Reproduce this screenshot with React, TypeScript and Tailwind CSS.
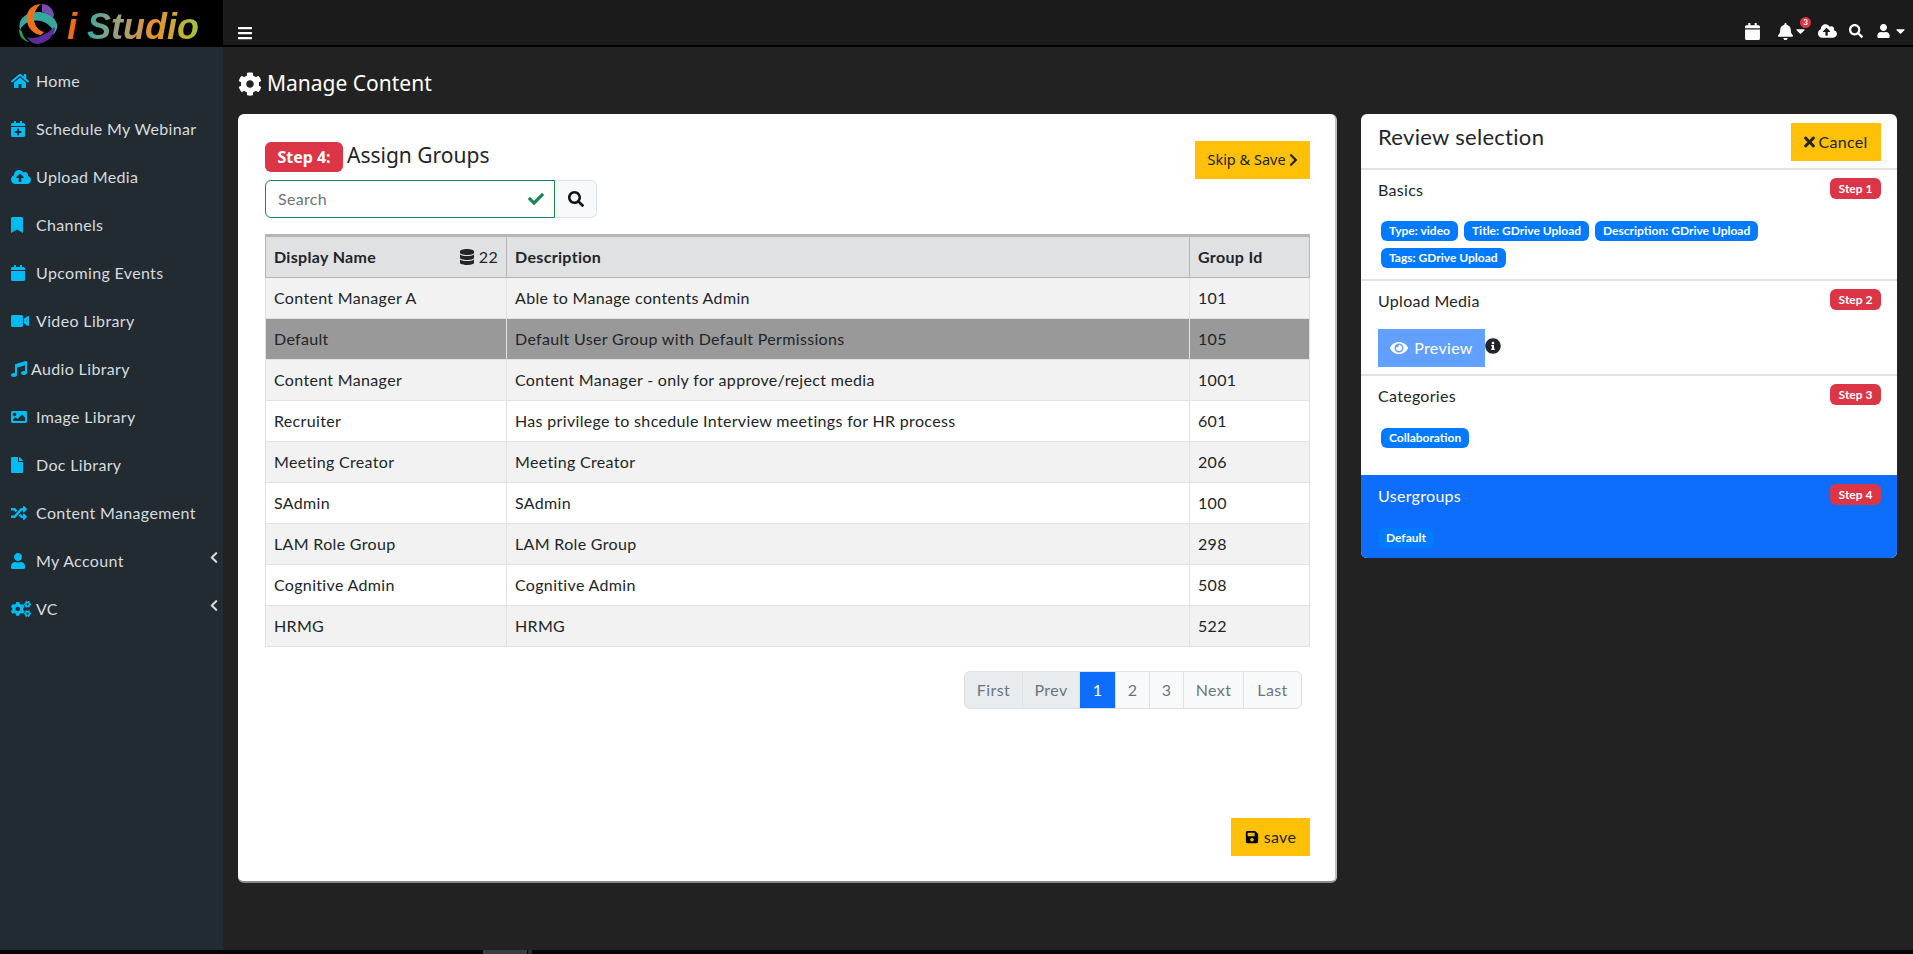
import React from 'react';
import {
  FaHome, FaCalendarPlus, FaCloudUploadAlt, FaBookmark, FaCalendar, FaVideo, FaMusic, FaImage, FaFile,
  FaRandom, FaUser, FaCogs, FaChevronLeft, FaChevronRight, FaCog, FaCheck, FaSearch, FaDatabase,
  FaTimes, FaEye, FaInfoCircle, FaSave, FaBell, FaBars, FaCaretDown,
} from 'react-icons/fa';

const body = '[font-family:Lato,sans-serif]';

const navItems = [
  { label: 'Home', icon: FaHome, size: 'w-[18px] h-[16px]' },
  { label: 'Schedule My Webinar', icon: FaCalendarPlus, size: 'w-[14px] h-[16px]' },
  { label: 'Upload Media', icon: FaCloudUploadAlt, size: 'w-[20px] h-[16px]' },
  { label: 'Channels', icon: FaBookmark, size: 'w-[12px] h-[16px]' },
  { label: 'Upcoming Events', icon: FaCalendar, size: 'w-[14px] h-[16px]' },
  { label: 'Video Library', icon: FaVideo, size: 'w-[18px] h-[16px]' },
  { label: 'Audio Library', icon: FaMusic, size: 'w-[16px] h-[16px]', narrow: true },
  { label: 'Image Library', icon: FaImage, size: 'w-[16px] h-[16px]' },
  { label: 'Doc Library', icon: FaFile, size: 'w-[12px] h-[16px]' },
  { label: 'Content Management', icon: FaRandom, size: 'w-[16px] h-[16px]' },
  { label: 'My Account', icon: FaUser, size: 'w-[14px] h-[16px]', chevron: true },
  { label: 'VC', icon: FaCogs, size: 'w-[20px] h-[16px]', chevron: true },
];

const groups = [
  ['Content Manager A', 'Able to Manage contents Admin', '101'],
  ['Default', 'Default User Group with Default Permissions', '105'],
  ['Content Manager', 'Content Manager - only for approve/reject media', '1001'],
  ['Recruiter', 'Has privilege to shcedule Interview meetings for HR process', '601'],
  ['Meeting Creator', 'Meeting Creator', '206'],
  ['SAdmin', 'SAdmin', '100'],
  ['LAM Role Group', 'LAM Role Group', '298'],
  ['Cognitive Admin', 'Cognitive Admin', '508'],
  ['HRMG', 'HRMG', '522'],
];

const pages = [
  { label: 'First', cls: 'w-[59px] bg-[#e9ecef] rounded-l-md text-[#6c757d]' },
  { label: 'Prev', cls: 'w-[58px] bg-[#e9ecef] text-[#6c757d]' },
  { label: '1', cls: 'w-[37px] bg-[#0d6efd] text-white border-[#0d6efd]' },
  { label: '2', cls: 'w-[35px] bg-[#f8f9fa] text-[#6c757d]' },
  { label: '3', cls: 'w-[35px] bg-[#f8f9fa] text-[#6c757d]' },
  { label: 'Next', cls: 'w-[61px] bg-[#f8f9fa] text-[#6c757d]' },
  { label: 'Last', cls: 'w-[59px] bg-[#f8f9fa] rounded-r-md text-[#6c757d]' },
];

const Chip: React.FC<{ children: React.ReactNode }> = ({ children }) => (
  <span className="h-5 px-2 rounded-md bg-[#007bff] text-white text-xs font-bold leading-5 whitespace-nowrap">{children}</span>
);

const Step: React.FC<{ n: number }> = ({ n }) => (
  <span className="w-[51px] h-[21px] rounded-md bg-[#dc3545] text-white text-xs font-bold leading-[21px] text-center">Step {n}</span>
);

const Logo = () => (
  <svg width="40" height="40" viewBox="0 0 40 40" className="shrink-0">
    <path d="M24 0c6 0 11 4 12 11l-1 3c-3-3-7-5-11-6z" fill="#7a4bb0" />
    <path d="M2 26C-1 15 8 7 22 8c8 1 15 5 17 12 1 4-1 8-4 11 1-6-3-11-12-14C14 15 6 18 2 26z" fill="#35a79c" />
    <path d="M23 0C13 0 7 9 9 17c1 7 6 13 14 14l3-3c-6-2-9-6-10-12-1-6 2-12 7-16z" fill="#f0701a" />
    <path d="M9 33c5 2 11 1 16-2 4-2 7-4 10-7 1-1 2-1 2 0-1 8-8 15-17 16-5 0-9-3-11-7z" fill="#5b2d9c" />
    <path d="M1 26c0 6 4 11 10 12-3-2-6-5-7-10-1-2-3-3-3-2z" fill="#2f9e44" />
  </svg>
);

export default function App() {
  return (
    <div className={`h-[954px] w-full overflow-hidden bg-black flex flex-col ${body}`}>
      <header className="h-[47px] flex shrink-0">
        <div className="w-[223px] h-[47px] bg-black flex items-center pl-[18px] gap-[9px]">
          <Logo />
          <span className="text-[36px] leading-none font-bold italic whitespace-nowrap [font-family:'Liberation_Sans',sans-serif] mt-[6px]">
            <span className="text-[#f26a1b]">i </span>
            <span className="bg-gradient-to-r from-[#2aa6a0] via-[#e8902a] via-60% to-[#9ac43c] bg-clip-text text-transparent">Studio</span>
          </span>
        </div>
        <div className="flex-1 h-[47px] bg-[#1b1b1b] border-b-2 border-black flex items-center justify-between pt-[17px] pl-[15px] pr-[8px] text-white">
          <FaBars className="w-[14px] h-[16px] mt-[3px]" />
          <div className="flex items-center">
            <FaCalendar className="w-[15px] h-[17px] mr-[18px]" />
            <div className="relative flex items-center mr-[13px]">
              <FaBell className="w-[15px] h-[17px]" />
              <FaCaretDown className="w-[9px] h-[14px] ml-[3px]" />
              <span className="absolute -top-[6px] left-[22px] w-[11px] h-[11px] rounded-full bg-[#dc3545] text-[8px] leading-[11px] font-bold text-center">3</span>
            </div>
            <FaCloudUploadAlt className="w-[19px] h-[16px] mr-[12px]" />
            <FaSearch className="w-[14px] h-[14px] mr-[14px]" />
            <FaUser className="w-[13px] h-[14px]" />
            <FaCaretDown className="w-[9px] h-[14px] ml-[6px]" />
          </div>
        </div>
      </header>

      <div className="flex-1 flex min-h-0">
        <aside className="w-[223px] bg-[#212b31] pt-[10px] shrink-0">
          {navItems.map((item) => (
            <div key={item.label} className="h-12 flex items-center pl-[11px] pr-[4px] relative text-[#d8dcdf] text-base tracking-[0.35px]">
              <span className={`flex shrink-0 ${item.narrow ? 'w-[20px]' : 'w-[25px]'}`}>
                <item.icon className={`text-[#00bcf2] ${item.size}`} />
              </span>
              <span className="whitespace-nowrap">{item.label}</span>
              {item.chevron && <FaChevronLeft className="absolute right-[5px] top-[14px] w-[8px] h-[13px] text-[#d8dcdf]" />}
            </div>
          ))}
        </aside>

        <main className="flex-1 bg-[#222222] pl-[15px] pr-[16px] min-w-0">
          <h1 className="h-[67px] pt-[6px] flex items-center gap-[5px] text-white text-[21px] [font-family:'Noto_Sans',sans-serif] font-normal">
            <FaCog className="w-6 h-6" /> Manage Content
          </h1>
          <div className="flex items-start gap-6">
            <section className="w-[1099px] h-[769px] bg-white rounded-md border-b-2 border-r-2 border-r-[#c0c0c0] border-b-[#8a8a8a] pl-[27px] pr-[25px] pt-[27px] text-[#212529] flex flex-col">
              <div className="flex items-start justify-between h-[39px]">
                <div className="flex items-start gap-[4px] mt-[1px]">
                  <span className="w-[78px] h-[30px] rounded-md bg-[#dc3545] text-white text-[16px] font-bold leading-[30px] text-center [font-family:'Noto_Sans',sans-serif]">Step 4:</span>
                  <span className="text-[21px] leading-[26px] [font-family:'Noto_Sans',sans-serif]">Assign Groups</span>
                </div>
                <button className="w-[115px] h-[38px] bg-[#ffc107] flex items-center justify-center gap-[3px] text-[14.5px] [font-family:'Noto_Sans',sans-serif]">
                  Skip &amp; Save <FaChevronRight className="w-[9px] h-[14px]" />
                </button>
              </div>
              <div className="flex h-[38px]">
                <div className="w-[290px] border border-[#198754] rounded-l-md flex items-center justify-between pl-[12px] pr-[10px]">
                  <span className="text-[#6c757d] tracking-[0.3px]">Search</span>
                  <FaCheck className="w-[16px] h-[16px] text-[#198754]" />
                </div>
                <div className="w-[42px] bg-[#f8f9fa] border border-l-0 border-[#dee2e6] rounded-r-md flex items-center justify-center">
                  <FaSearch className="w-[16px] h-[16px] text-[#111]" />
                </div>
              </div>

              <table className="mt-4 w-[1045px] table-fixed border-collapse text-base tracking-[0.33px]">
                <thead>
                  <tr className="h-[42px] bg-[#e0e1e3] border-t-[3px] border-[#b5b6b8] text-left">
                    <th className="w-[241px] px-2 font-bold border border-t-[3px] border-[#b5b6b8]">
                      <div className="flex justify-between items-center">
                        <span>Display Name</span>
                        <span className="flex items-center gap-[5px] font-normal"><FaDatabase className="w-[14px] h-[16px]" />22</span>
                      </div>
                    </th>
                    <th className="w-[683px] px-2 font-bold border border-t-[3px] border-[#b5b6b8]">Description</th>
                    <th className="px-2 font-bold border border-t-[3px] border-[#b5b6b8]">Group Id</th>
                  </tr>
                </thead>
                <tbody>
                  {groups.map((row, i) => {
                    const bg = row[0] === 'Default' ? 'bg-[#999999]' : i % 2 === 0 ? 'bg-[#f2f2f2]' : 'bg-white';
                    return (
                      <tr key={row[0]} className={`h-[41px] ${bg}`}>
                        {row.map((cell, j) => (
                          <td key={j} className="px-2 border border-[#dee2e6] whitespace-nowrap">{cell}</td>
                        ))}
                      </tr>
                    );
                  })}
                </tbody>
              </table>

              <div className="mt-[24px] pr-[8px] flex justify-end">
                {pages.map((p) => (
                  <span key={p.label} className={`h-[38px] flex items-center justify-center border border-[#dee2e6] -ml-px tracking-[0.4px] ${p.cls}`}>{p.label}</span>
                ))}
              </div>

              <div className="mt-[109px] flex justify-end">
                <button className="w-[79px] h-[38px] bg-[#ffc107] flex items-center justify-center gap-[5px] tracking-[0.3px]">
                  <FaSave className="w-[14px] h-[14px] text-black" /> save
                </button>
              </div>
            </section>

            <section className="w-[536px] h-[444px] bg-white rounded-md overflow-hidden text-[#212529] flex flex-col">
              <div className="h-[56px] border-b-2 border-[#e2e2e2] pl-[17px] pr-[16px] pt-[9px] flex justify-between items-start">
                <span className="text-[22px] leading-[28px] tracking-[0.3px]">Review selection</span>
                <button className="w-[90px] h-[38px] bg-[#ffc107] flex items-center justify-center gap-[3px] tracking-[0.3px]">
                  <FaTimes className="w-[11px] h-[16px]" /> Cancel
                </button>
              </div>

              <div className="h-[111px] border-b-2 border-[#e2e2e2] pl-[17px] pr-[16px] pt-[8px]">
                <div className="flex justify-between items-start">
                  <span className="tracking-[0.3px]">Basics</span>
                  <Step n={1} />
                </div>
                <div className="mt-[19px] ml-[3px] flex flex-wrap gap-x-[6px] gap-y-[7px]">
                  <Chip>Type: video</Chip>
                  <Chip>Title: GDrive Upload</Chip>
                  <Chip>Description: GDrive Upload</Chip>
                  <Chip>Tags: GDrive Upload</Chip>
                </div>
              </div>

              <div className="h-[95px] border-b-2 border-[#e2e2e2] pl-[17px] pr-[16px] pt-[8px]">
                <div className="flex justify-between items-start">
                  <span className="tracking-[0.3px]">Upload Media</span>
                  <Step n={2} />
                </div>
                <div className="mt-[16px] flex items-start">
                  <button className="w-[107px] h-[38px] bg-[#62a0ff] text-white flex items-center justify-center gap-[6px] tracking-[0.3px]">
                    <FaEye className="w-[18px] h-[16px]" /> Preview
                  </button>
                  <FaInfoCircle className="w-[16px] h-[16px] mt-[9px] text-[#212529]" />
                </div>
              </div>

              <div className="h-[99px] pl-[17px] pr-[16px] pt-[8px]">
                <div className="flex justify-between items-start">
                  <span className="tracking-[0.3px]">Categories</span>
                  <Step n={3} />
                </div>
                <div className="mt-[20px] ml-[3px] flex"><Chip>Collaboration</Chip></div>
              </div>

              <div className="flex-1 bg-[#0d6efd] text-white pl-[17px] pr-[16px] pt-[9px]">
                <div className="flex justify-between items-start">
                  <span className="tracking-[0.3px]">Usergroups</span>
                  <Step n={4} />
                </div>
                <div className="mt-[20px] flex"><Chip>Default</Chip></div>
              </div>
            </section>
          </div>
        </main>
      </div>
      <div className="h-[4px] bg-[#050509] shrink-0 flex pl-[483px]">
        <div className="w-[44px] bg-[#3b3b40]" />
        <div className="w-[4px] ml-px bg-[#2a2a2e]" />
      </div>
    </div>
  );
}
